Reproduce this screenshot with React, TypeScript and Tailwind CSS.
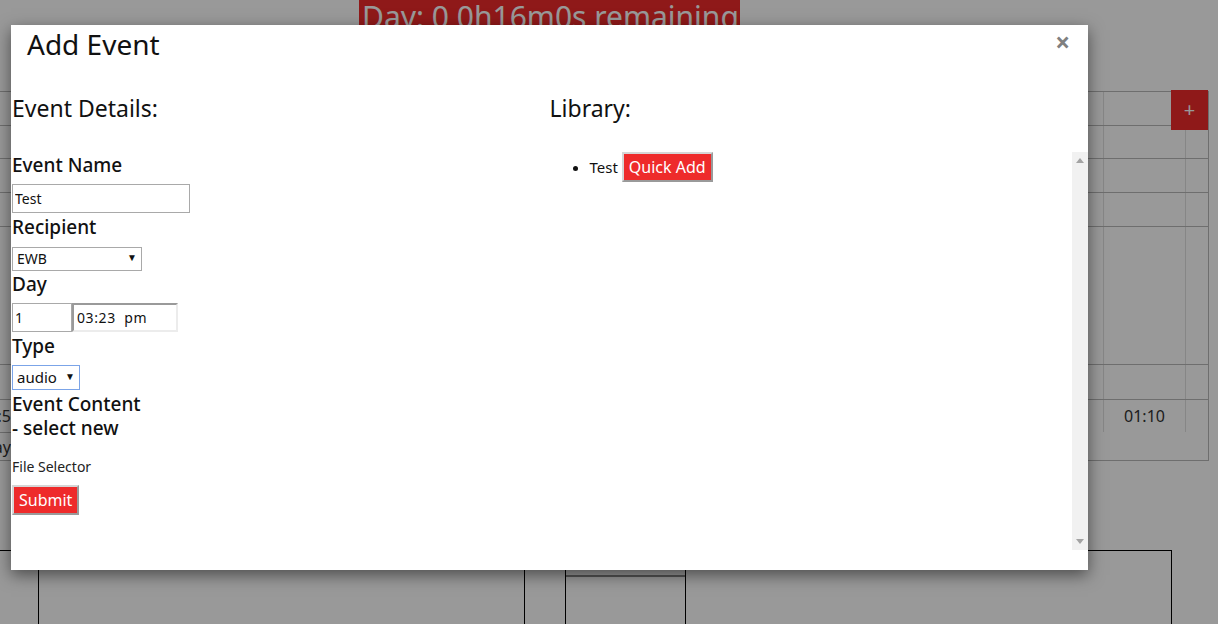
const rows = [34, 33, 34, 34, 138, 35, 33];

function BackgroundPage() {
  return (
    <div className="relative w-[1218px] h-[624px] bg-white overflow-hidden">
      {/* Countdown banner */}
      <div className="flex">
        <div className="ml-[359px] w-[381px] h-[32px] bg-[#ee2b2b] text-white text-[30px] leading-[34px] pl-[3px] whitespace-nowrap overflow-hidden">
          Day: 0 0h16m0s remaining
        </div>
      </div>

      {/* Schedule table */}
      <div className="mt-[59px] w-[1209px] border-r border-b border-[#b8b8b8]">
        {rows.map((h, i) => (
          <div
            key={i}
            className="flex border-t border-[#b8b8b8] text-[16px] text-[#333]"
            style={{ height: h }}
          >
            <div className="w-[11px] flex items-center justify-end overflow-hidden whitespace-nowrap">
              {i === 6 ? '00:5' : ''}
            </div>
            <div className="flex-1" />
            <div className="w-[82px] border-l border-[#e0e0e0] flex items-center justify-center">
              {i === 6 ? '01:10' : ''}
            </div>
            <div className="w-[23px] border-l border-[#e0e0e0]" />
          </div>
        ))}
        <div className="h-[28px] border-t border-[#b8b8b8] flex items-center justify-end w-[11px] text-[16px] text-[#333] overflow-hidden">
          Today
        </div>
      </div>

      {/* Add button over the table corner */}
      <div className="absolute left-[1171px] top-[90px] w-[37px] h-[40px] bg-[#ee2b2b] text-white text-[20px] flex items-center justify-center">
        +
      </div>

      {/* Lower panels */}
      <div className="mt-[89px] w-[1172px] h-[80px] border-t border-black flex">
        <div className="w-[38px]" />
        <div className="w-[486px] border-l border-black" />
        <div className="w-[41px] border-l border-black" />
        <div className="w-[121px] border-l border-r border-black">
          <div className="mt-[24px] h-[2px] bg-[#8a8a8a]" />
        </div>
        <div className="flex-1 border-r border-black" />
      </div>
    </div>
  );
}

function RedButton({ children }: { children: React.ReactNode }) {
  return (
    <button className="h-[30px] px-[5px] bg-[#ee2b2b] text-white text-[16px] leading-none border-2 border-t-[#d6d6d6] border-l-[#d6d6d6] border-r-[#9a9a9a] border-b-[#9a9a9a]">
      {children}
    </button>
  );
}

function Label({ children }: { children: React.ReactNode }) {
  return <div className="mt-[2px] h-[24px] leading-[24px] text-[19px] font-medium text-[#111]">{children}</div>;
}

function Arrow({ up }: { up?: boolean }) {
  return (
    <svg width="8" height="5" viewBox="0 0 8 5" className="fill-[#a3a3a3]">
      <polygon points={up ? '0,5 8,5 4,0' : '0,0 8,0 4,5'} />
    </svg>
  );
}

export default function App() {
  return (
    <div className="relative w-[1218px] h-[624px] overflow-hidden font-['Segoe_UI','Noto_Sans',sans-serif]">
      <BackgroundPage />

      {/* Modal backdrop */}
      <div className="absolute inset-0 bg-black/40" />

      {/* Add Event modal */}
      <div className="absolute left-[11px] top-[25px] w-[1077px] h-[545px] bg-white shadow-[0_5px_15px_rgba(0,0,0,0.5)] text-[#111]">
        <div className="h-[38px] pl-[16px] pr-[18px] flex items-center justify-between">
          <h1 className="text-[28px] leading-none">Add Event</h1>
          <button className="text-[26px] font-bold text-[#808080] leading-none -mt-[4px]">×</button>
        </div>

        <div className="grid grid-cols-2">
          {/* Event details form */}
          <div className="pt-[30px] pl-[1px]">
            <h2 className="text-[23px] leading-[30px]">Event Details:</h2>

            <div className="mt-[30px]">
              <Label>Event Name</Label>
              <input
                defaultValue="Test"
                className="mt-[7px] block w-[178px] h-[29px] border border-[#a9a9a9] px-[2px] text-[14px] outline-none"
              />

              <Label>Recipient</Label>
              <div className="relative mt-[7px] w-[130px] h-[24px]">
                <select className="appearance-none w-full h-full border border-[#a9a9a9] bg-white pl-[4px] text-[14px] outline-none">
                  <option>EWB</option>
                </select>
                <span className="absolute right-[5px] top-[4px] text-[10px] pointer-events-none">▼</span>
              </div>

              <Label>Day</Label>
              <div className="mt-[7px] flex">
                <input
                  defaultValue="1"
                  className="w-[60px] h-[29px] border border-[#a9a9a9] px-[2px] text-[14px] outline-none"
                />
                <div className="w-[106px] h-[29px] border-2 border-t-[#9a9a9a] border-l-[#9a9a9a] border-r-[#ececec] border-b-[#ececec] px-[3px] text-[14px] leading-[25px] tracking-[0.6px] whitespace-pre">
                  03:23  pm
                </div>
              </div>

              <Label>Type</Label>
              <div className="relative mt-[7px] w-[68px] h-[25px]">
                <select className="appearance-none w-full h-full border border-[#7ba4e8] bg-white pl-[4px] text-[15px] outline-none">
                  <option>audio</option>
                </select>
                <span className="absolute right-[5px] top-[4px] text-[10px] pointer-events-none">▼</span>
              </div>

              <Label>Event Content</Label>
              <div className="h-[24px] leading-[24px] text-[19px] font-medium">- select new</div>

              <div className="mt-[17px] text-[14px] leading-[20px] text-[#222]">File Selector</div>
              <div className="mt-[8px]">
                <RedButton>Submit</RedButton>
              </div>
            </div>
          </div>

          {/* Library */}
          <div className="pt-[30px]">
            <h2 className="text-[23px] leading-[30px]">Library:</h2>
            <div className="mt-[29px] h-[398px] flex">
              <ul className="flex-1 list-disc pl-[40px] text-[15px]">
                <li>
                  <div className="flex items-center gap-[4px]">
                    <span>Test</span>
                    <RedButton>Quick Add</RedButton>
                  </div>
                </li>
              </ul>
              <div className="w-[16px] bg-[#f1f1f1] flex flex-col items-center justify-between pt-[6px] pb-[6px]">
                <Arrow up />
                <Arrow />
              </div>
            </div>
          </div>
        </div>
      </div>
    </div>
  );
}
